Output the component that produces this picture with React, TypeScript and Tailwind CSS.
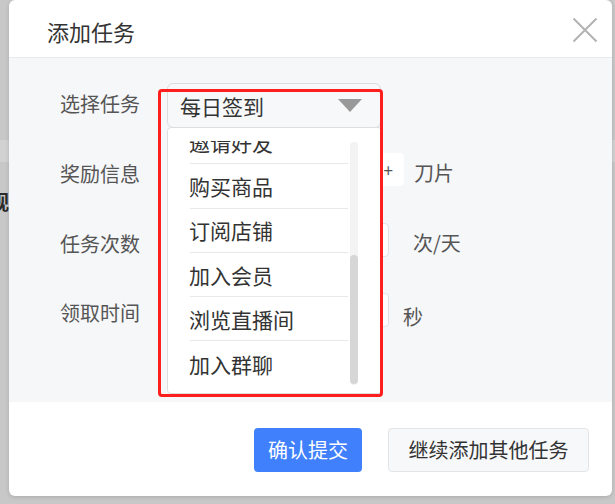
import React from "react";

const cjk = { fontFamily: '"Noto Sans CJK SC", "Noto Sans", sans-serif' };

const tasks = ["邀请好友", "购买商品", "订阅店铺", "加入会员", "浏览直播间", "加入群聊"];

function CloseIcon() {
  return (
    <svg width="26" height="26" viewBox="0 0 26 26" fill="none">
      <path d="M1.5 1.5L24.5 24.5M24.5 1.5L1.5 24.5" stroke="#b3b3b3" strokeWidth="2" />
    </svg>
  );
}

function FormRow({
  label,
  className,
  labelClass,
  children,
}: {
  label: string;
  className: string;
  labelClass: string;
  children: React.ReactNode;
}) {
  return (
    <div className={`flex items-center ${className}`}>
      <div
        className={`w-[131px] shrink-0 text-right text-[20px] leading-[28px] text-[#555] ${labelClass}`}
      >
        {label}
      </div>
      <div className="ml-[27px] flex items-center">{children}</div>
    </div>
  );
}

export default function App() {
  return (
    <div
      className="relative h-[504px] w-[615px] overflow-hidden bg-[#c9c8c9]"
      style={cjk}
    >
      {/* page behind the mask */}
      <div className="mt-[140px] h-[22px] w-full bg-[#d3d2d3]" />
      <div className="ml-[-31px] mt-[28px] text-[20px] font-bold leading-[24px] text-[#2b2b2b]">
        外观
      </div>

      {/* dialog */}
      <div className="absolute left-[9px] top-0 flex h-[496px] w-[603px] flex-col overflow-hidden rounded-[6px] bg-white shadow-[0_1px_4px_rgba(0,0,0,0.15)]">
        <div className="flex h-[58px] shrink-0 items-center justify-between border-b border-[#e9eaec] pl-[38px] pr-[14px]">
          <div className="pt-[5px] text-[22px] leading-[30px] text-[#333]">添加任务</div>
          <div className="pt-[2px]">
            <CloseIcon />
          </div>
        </div>

        <div className="relative flex-1 bg-[#f6f7f9] pt-[25px]">
          <FormRow label="选择任务" className="h-[45px]" labelClass="pb-[4px]">
            <div className="flex h-[45px] w-[214px] items-center justify-between rounded-[6px] border border-[#dcdcdc] bg-[#f7f8f9] pl-[12px] pr-[18px]">
              <span className="text-[21px] leading-[28px] text-[#333]">每日签到</span>
              <svg width="24" height="13" viewBox="0 0 24 13">
                <path d="M0 0H24L12 13Z" fill="#999" />
              </svg>
            </div>
          </FormRow>

          <FormRow label="奖励信息" className="mt-[25px] h-[33px]" labelClass="pt-[9px]">
            <div className="flex h-[33px] w-[237px] items-center justify-end rounded-[4px] bg-white pr-[11px]">
              <span className="text-[17px] leading-none text-[#555]">+</span>
            </div>
            <span className="ml-[10px] pt-[6px] text-[20px] leading-[28px] text-[#555]">刀片</span>
          </FormRow>

          <FormRow label="任务次数" className="mt-[37px] h-[34px]" labelClass="pt-[8px]">
            <div className="h-[34px] w-[222px] rounded-[4px] border border-[#e3e3e3] bg-white" />
            <span className="ml-[24px] pt-[6px] text-[20px] leading-[28px] text-[#555]">次/天</span>
          </FormRow>

          <FormRow label="领取时间" className="mt-[36px] h-[34px]" labelClass="pt-[5px]">
            <div className="h-[34px] w-[222px] rounded-[4px] border border-[#e3e3e3] bg-white" />
            <span className="ml-[14px] pt-[14px] text-[20px] leading-[28px] text-[#555]">秒</span>
          </FormRow>
        </div>

        <div className="flex h-[94px] shrink-0 items-start justify-end gap-[26px] pr-[23px] pt-[26px]">
          <button className="h-[44px] w-[108px] rounded-[4px] bg-[#4080fd] text-[20px] text-white">
            确认提交
          </button>
          <button className="h-[44px] w-[201px] rounded-[4px] border border-[#e3e4e6] bg-[#f7f8fa] text-[20px] text-[#333]">
            继续添加其他任务
          </button>
        </div>

        {/* open dropdown menu */}
        <div className="absolute left-[158px] top-[127px] h-[267px] w-[215px] rounded-[4px] border border-[#dedede] bg-white pt-[13px]">
          <div className="relative h-[244px] overflow-hidden">
            <div className="ml-[22px] mt-[-21px] w-[158px]">
              {tasks.map((t, i) => (
                <div
                  key={t}
                  className={`flex h-[44.3px] items-center pl-[0px] text-[21px] leading-[28px] text-[#333] ${
                    i < tasks.length - 1 ? "border-b border-[#e8e8e8]" : ""
                  }`}
                >
                  <span className="ml-[-1px]">{t}</span>
                </div>
              ))}
            </div>
          </div>
          <div className="absolute left-[182px] top-[14px] h-[243px] w-[8px] rounded-full bg-[#f3f3f3]">
            <div className="mt-[113px] h-[129px] w-[8px] rounded-full bg-[#d6d6d6]" />
          </div>
        </div>

        {/* highlight frame */}
        <div className="pointer-events-none absolute left-[149px] top-[89px] h-[308px] w-[225px] rounded-[4px] border-[3.5px] border-[#fe1e1e]" />
      </div>
    </div>
  );
}
